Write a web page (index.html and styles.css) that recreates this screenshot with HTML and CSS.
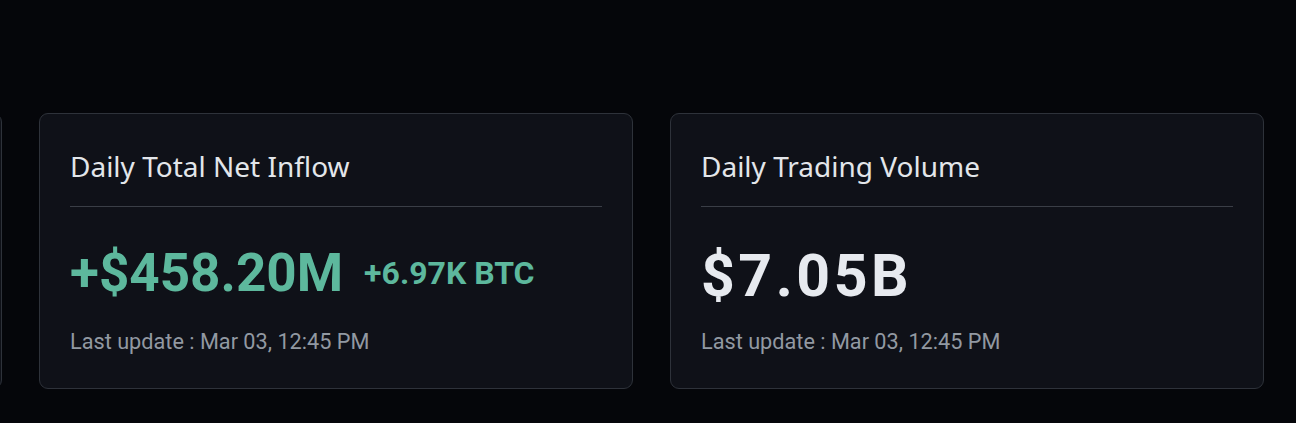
FILE: index.html
```html
<!DOCTYPE html>
<html lang="en">
<head>
<meta charset="utf-8">
<title>ETF Stats</title>
<link rel="stylesheet" href="styles.css">
</head>
<body>
<div class="row">
  <section class="card" aria-hidden="true"></section>
  <section class="card">
    <h2 class="card-title">Daily Total Net Inflow</h2>
    <div class="divider"></div>
    <div class="value-line">
      <span class="value green">+$458.20M</span>
      <span class="sub green">+6.97K BTC</span>
    </div>
    <div class="updated">Last update : Mar 03, 12:45 PM</div>
  </section>
  <section class="card">
    <h2 class="card-title">Daily Trading Volume</h2>
    <div class="divider"></div>
    <div class="value-line">
      <span class="value big white">$7.05B</span>
    </div>
    <div class="updated">Last update : Mar 03, 12:45 PM</div>
  </section>
</div>
</body>
</html>
```

FILE: styles.css
```css
html, body {
  margin: 0;
  padding: 0;
  background: #05060a;
  height: 100%;
  overflow: hidden;
}

body {
  font-family: "Noto Sans", "Liberation Sans", sans-serif;
}

.row {
  display: flex;
  gap: 37px;
  margin-left: -592px;
  padding-top: 113px;
}

.card {
  flex: 0 0 594px;
  box-sizing: border-box;
  height: 276px;
  background: #0f1118;
  border: 1.5px solid #2e323a;
  border-radius: 9px;
  padding: 34px 30px 0 30px;
}

.card-title {
  margin: 0;
  font-weight: 400;
  font-size: 28px;
  line-height: 36px;
  color: #e3e6ea;
}

.divider {
  height: 1px;
  background: #3a3e46;
  margin-top: 22px;
}

.value-line {
  display: flex;
  align-items: center;
  gap: 21px;
  margin-top: 35px;
  height: 62px;
}

.value {
  font-family: "Roboto", "Liberation Sans", sans-serif;
  font-weight: 700;
  font-size: 53px;
  line-height: 62px;
}

.value.big {
  font-size: 59px;
  letter-spacing: 3.5px;
  margin-top: 6px;
}

.sub {
  font-family: "Roboto", "Liberation Sans", sans-serif;
  font-weight: 700;
  font-size: 32px;
  line-height: 40px;
}

.green { color: #5db89d; }
.white { color: #e7eaef; }

.updated {
  margin-top: 24px;
  font-family: "Roboto", "Liberation Sans", sans-serif;
  font-size: 21.7px;
  line-height: 28px;
  color: #9299a2;
}
```
